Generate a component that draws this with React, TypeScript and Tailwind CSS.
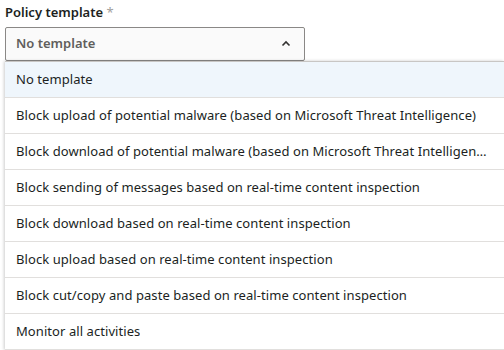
const options = [
  "No template",
  "Block upload of potential malware (based on Microsoft Threat Intelligence)",
  "Block download of potential malware (based on Microsoft Threat Intelligence)",
  "Block sending of messages based on real-time content inspection",
  "Block download based on real-time content inspection",
  "Block upload based on real-time content inspection",
  "Block cut/copy and paste based on real-time content inspection",
  "Monitor all activities",
];

export default function App() {
  return (
    <div
      className="h-[350px] w-[504px] overflow-hidden bg-white text-[13px] text-[#201f1e]"
      style={{ fontFamily: '"Segoe UI", "Noto Sans", "Open Sans", sans-serif' }}
    >
      <div className="pl-[5px] pt-[2px]">
        <div className="h-[25px] font-semibold leading-[20px]">
          Policy template <span className="font-normal text-[#a19f9d]">*</span>
        </div>
        <div className="flex h-[34px] w-[300px] items-center justify-between rounded-[2px] border border-[#8a8886] bg-[#fafafa] pl-[10px] pr-[12px]">
          <span className="font-semibold text-[#605e5c]">No template</span>
          <svg width="12" height="12" viewBox="0 0 12 12" className="text-[#323130]">
            <path d="M2.5 7.5 L6 4 L9.5 7.5" fill="none" stroke="currentColor" strokeWidth="1.6" />
          </svg>
        </div>
        <div className="w-[499px] border-t border-[#c8c6c4] bg-white shadow-[-1px_0_3px_rgba(0,0,0,0.2)]">
          {options.map((o, i) => (
            <div
              key={o}
              className={[
                "flex h-[36px] items-center border-b border-[#e1dfdd] pl-[11px] pr-[14px] tracking-[0.07px]",
                i === 0 ? "bg-[#eff6fc]" : "",
              ].join(" ")}
            >
              <span className="truncate">{o}</span>
            </div>
          ))}
        </div>
      </div>
    </div>
  );
}
